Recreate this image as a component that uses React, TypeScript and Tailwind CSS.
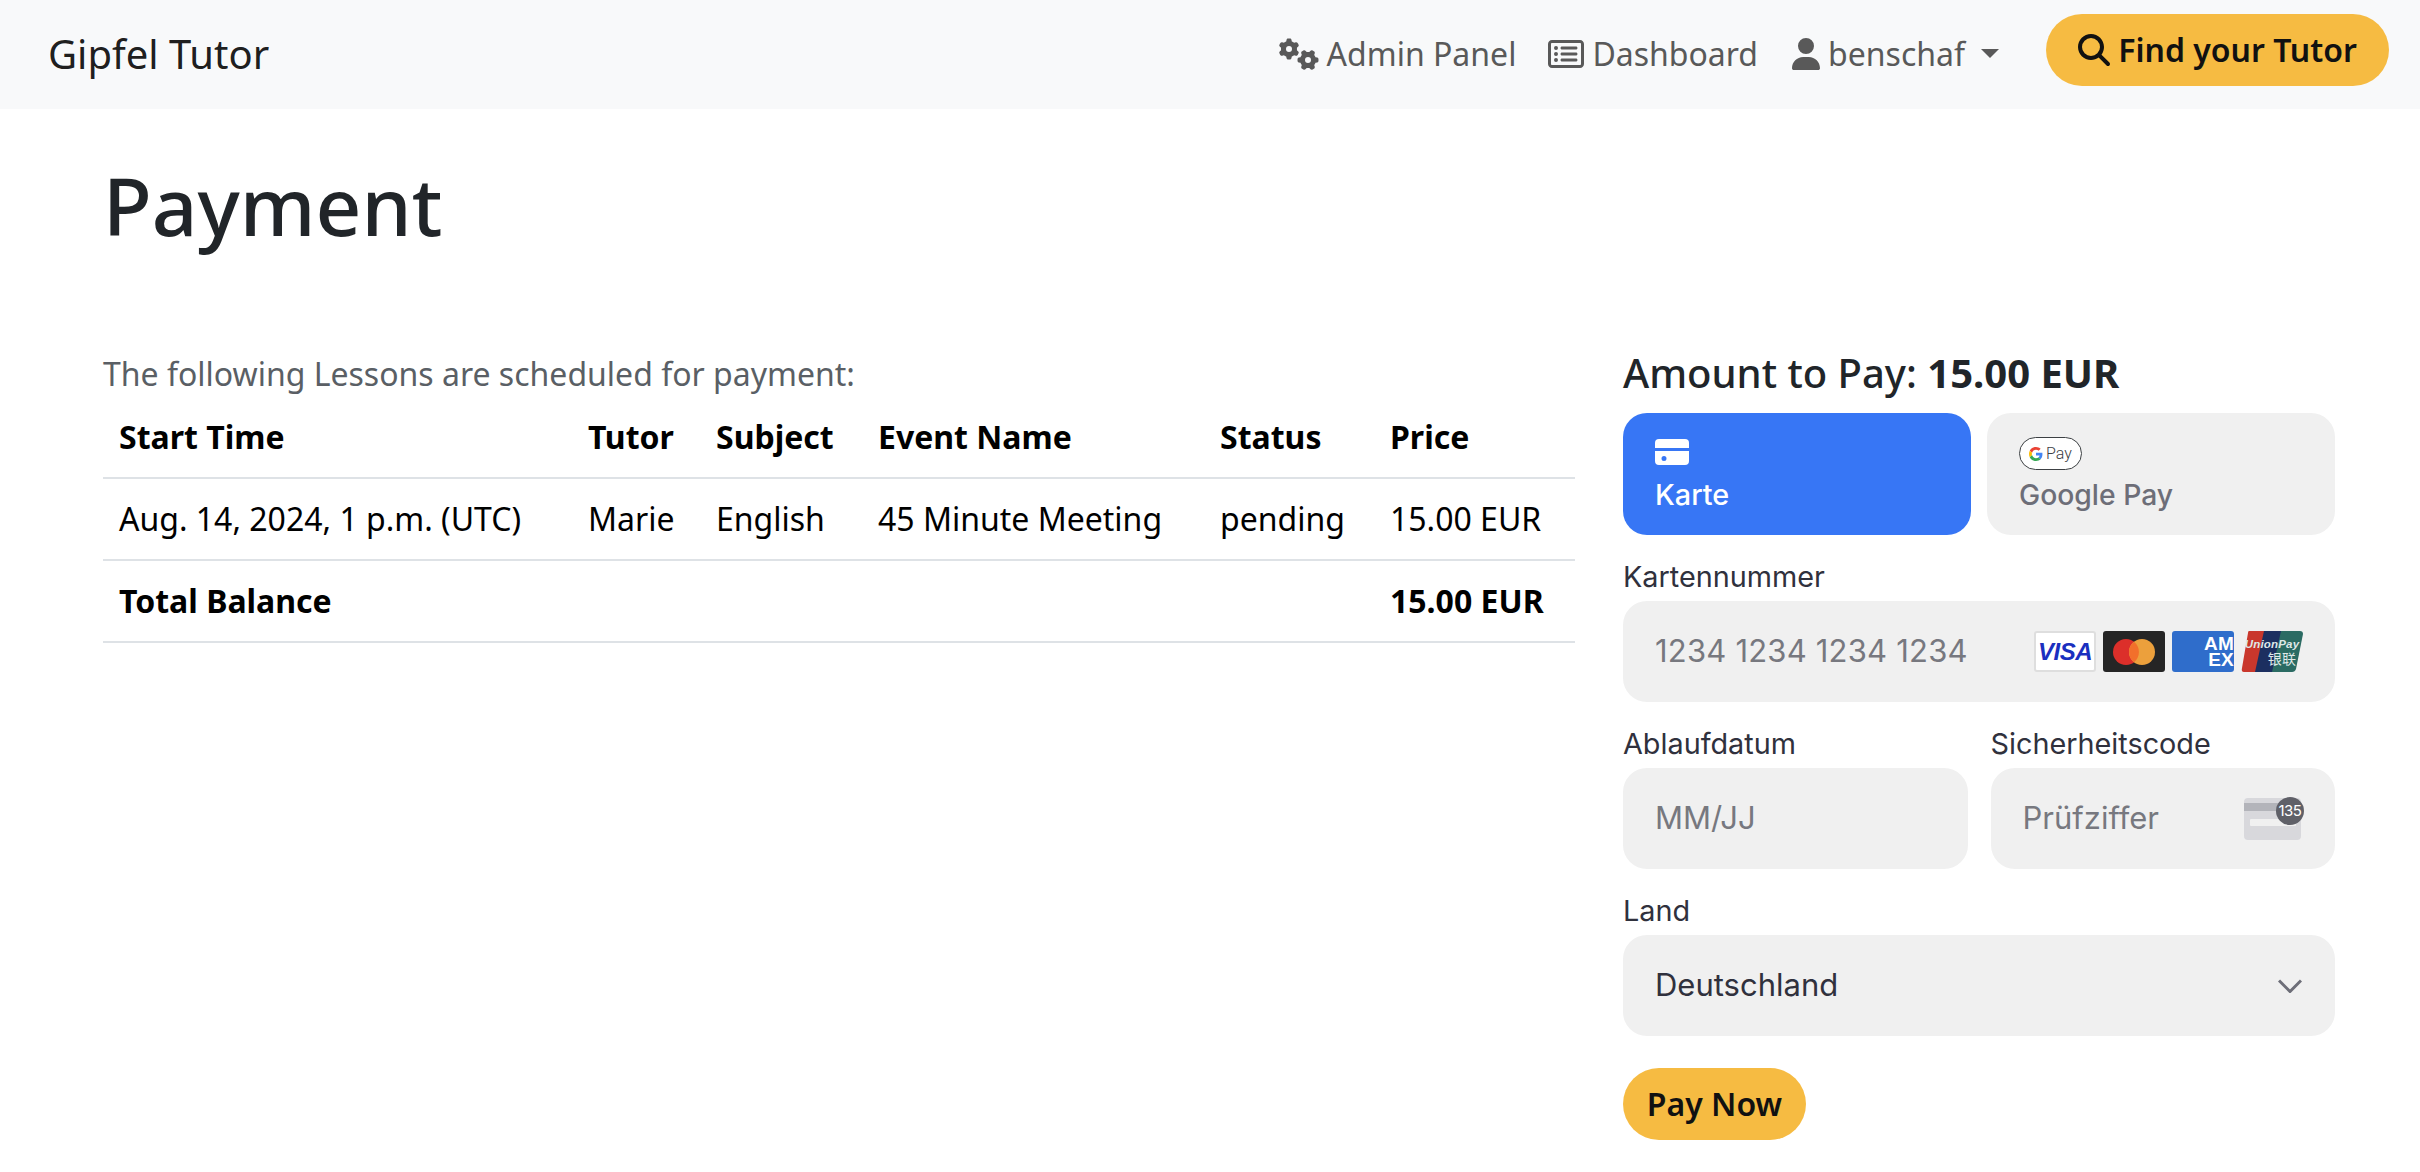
import { FaGears, FaRegRectangleList, FaUser, FaMagnifyingGlass } from "react-icons/fa6"

const NOTO = "font-['Noto_Sans',sans-serif]"
const INTER = "font-['Inter',sans-serif]"

function NavLink({ icon, label }: { icon: React.ReactNode; label: string }) {
  return (
    <a className="flex items-center gap-2 text-[32px] leading-[48px] text-[#595959]">
      {icon}
      {label}
    </a>
  )
}

function VisaMark() {
  return (
    <div className="flex h-[41px] w-[62px] items-center justify-center rounded-[3px] border-2 border-[#dedede] bg-white">
      <span className="font-['Liberation_Sans',sans-serif] text-[24px] font-bold italic leading-none tracking-[-0.5px] text-[#1a2fbf]">VISA</span>
    </div>
  )
}

function MastercardMark() {
  return (
    <div className="flex h-[41px] w-[62px] items-center justify-center rounded-[3px] bg-[#252525]">
      <svg width="42" height="26" viewBox="0 0 42 26">
        <circle cx="13" cy="13" r="13" fill="#dc2f2a" />
        <circle cx="29" cy="13" r="13" fill="#eca03c" />
        <path d="M21 2.800a13 13 0 0 1 0 20.400a13 13 0 0 1 0-20.400z" fill="#f2702b" />
      </svg>
    </div>
  )
}

function AmexMark() {
  return (
    <div className="flex h-[41px] w-[62px] flex-col items-end justify-center rounded-[3px] bg-[#2f6dcb] font-['Liberation_Sans',sans-serif] text-[19px] font-bold leading-[16px] text-white">
      <span>AM</span>
      <span>EX</span>
    </div>
  )
}

function UnionPayMark() {
  return (
    <div className="relative h-[41px] w-[62px]">
      <svg width="62" height="41" viewBox="0 0 62 41" className="absolute inset-0">
        <path d="M8 0h22l-8 41H3q-3 0-2-4L7 2q0-2 1-2z" fill="#c9372c" />
        <path d="M23 0h24l-8 41H14z" fill="#1c2f60" />
        <path d="M40 0h19q3 0 3 3l-7 35q-1 3-4 3H31z" fill="#2b6b63" />
      </svg>
      <div className="absolute inset-0 flex flex-col items-center justify-center text-[#dfe8e8]">
        <span className="font-['Liberation_Sans',sans-serif] text-[11.500px] font-bold italic leading-[13px]">UnionPay</span>
        <span className="ml-[20px] font-['Noto_Sans_CJK_SC',sans-serif] text-[14px] leading-[14px]">银联</span>
      </div>
    </div>
  )
}

function GPayBadge() {
  return (
    <div className="flex h-[33px] w-[63px] items-center justify-center gap-[3px] rounded-full border border-[#3c4043] bg-white">
      <svg width="14" height="14" viewBox="0 0 48 48">
        <path fill="#EA4335" d="M24 9.500c3.500 0 6.600 1.200 9.100 3.600l6.800-6.800C35.800 2.400 30.400 0 24 0 14.600 0 6.500 5.400 2.600 13.200l7.900 6.100C12.400 13.600 17.700 9.500 24 9.500z" />
        <path fill="#4285F4" d="M46.100 24.500c0-1.600-.1-3.100-.4-4.500H24v9h12.400c-.5 2.900-2.200 5.400-4.700 7l7.600 5.900c4.400-4.100 6.800-10.100 6.800-17.400z" />
        <path fill="#FBBC05" d="M10.500 28.700c-.5-1.500-.8-3-.8-4.700s.3-3.200.8-4.700l-7.900-6.100C.9 16.500 0 20.100 0 24s.9 7.500 2.600 10.800l7.900-6.100z" />
        <path fill="#34A853" d="M24 48c6.500 0 11.900-2.100 15.900-5.800l-7.600-5.900c-2.100 1.400-4.900 2.300-8.300 2.300-6.300 0-11.600-4.200-13.500-9.900l-7.900 6.100C6.500 42.600 14.600 48 24 48z" />
      </svg>
      <span className="font-['Roboto',sans-serif] text-[16px] font-light leading-none text-[#3c4043]">Pay</span>
    </div>
  )
}

function FieldLabel({ children }: { children: React.ReactNode }) {
  return <label className={`${INTER} mb-[10px] block h-[28px] text-[28.800px] leading-[28px] text-[#30313d]`}>{children}</label>
}

export default function App() {
  return (
    <div className={`${NOTO} min-h-[1172px] bg-white`}>
      <nav className="flex h-[109px] items-center justify-between bg-[#f8f9fa] pb-[2px] pl-[48px] pr-[31px]">
        <a className="text-[40px] leading-[60px] text-black/90">Gipfel Tutor</a>
        <div className="flex items-center">
          <div className="flex items-center gap-[32px]">
            <NavLink icon={<FaGears className="h-[32px] w-[40px]" />} label="Admin Panel" />
            <NavLink icon={<FaRegRectangleList className="h-[32px] w-[36px]" />} label="Dashboard" />
            <a className="ml-[2px] flex items-center gap-2 text-[32px] leading-[48px] text-[#595959]">
              <FaUser className="h-[32px] w-[28px]" />
              benschaf
              <span className="ml-[8px] h-0 w-0 border-x-[9.600px] border-t-[9.600px] border-x-transparent border-t-[#595959]" />
            </a>
          </div>
          <button className="mb-[8px] ml-[47px] flex h-[72px] w-[343px] items-center justify-center gap-2 rounded-full bg-[#f6bb42] text-[32px] font-semibold text-[#111]">
            <FaMagnifyingGlass className="h-[32px] w-[32px]" />
            Find your Tutor
          </button>
        </div>
      </nav>

      <main className="pl-[103px] pr-[86px]">
        <h1 className="mb-[96px] mt-[48px] text-[80px] font-medium leading-[96px] text-[#212529]">Payment</h1>

        <div className="flex items-start gap-[48px]">
          <div className="w-[1472px] shrink-0">
            <p className="pt-[2px] text-[32px] leading-[46px] text-[#5a5f65]">The following Lessons are scheduled for payment:</p>
            <table className="w-full border-collapse text-[32px] leading-[48px] text-black">
              <thead>
                <tr className="border-b-2 border-[#dee2e6] text-left">
                  <th className="w-[469px] p-[16px] font-bold">Start Time</th>
                  <th className="w-[128px] p-[16px] font-bold">Tutor</th>
                  <th className="w-[162px] p-[16px] font-bold">Subject</th>
                  <th className="w-[342px] p-[16px] font-bold">Event Name</th>
                  <th className="w-[170px] p-[16px] font-bold">Status</th>
                  <th className="p-[16px] font-bold">Price</th>
                </tr>
              </thead>
              <tbody>
                <tr className="border-b-2 border-[#dee2e6]">
                  <td className="p-[16px]">Aug. 14, 2024, 1 p.m. (UTC)</td>
                  <td className="p-[16px]">Marie</td>
                  <td className="p-[16px]">English</td>
                  <td className="p-[16px]">45 Minute Meeting</td>
                  <td className="p-[16px]">pending</td>
                  <td className="p-[16px]">15.00 EUR</td>
                </tr>
                <tr className="border-b-2 border-[#dee2e6] font-bold">
                  <td className="p-[16px]">Total Balance</td>
                  <td className="p-[16px]" />
                  <td className="p-[16px]" />
                  <td className="p-[16px]" />
                  <td className="p-[16px]" />
                  <td className="p-[16px]">15.00 EUR</td>
                </tr>
              </tbody>
            </table>
          </div>

          <div className="w-[712px] shrink-0">
            <h5 className="mb-[16px] text-[40px] font-medium leading-[48px] text-[#212529]">
              Amount to Pay: <strong className="font-bold">15.00 EUR</strong>
            </h5>

            <div className={`${INTER} flex gap-[16px]`}>
              <div className="flex h-[122px] flex-1 flex-col justify-between rounded-[24px] bg-[#3776f5] px-[32px] pb-[22px] pt-[26px] text-[28.800px] font-medium leading-[36px] text-white">
                <svg width="34" height="26" viewBox="0 0 34 26" fill="white">
                  <path d="M0 9V4q0-4 4-4h26q4 0 4 4v5z" />
                  <path fillRule="evenodd" d="M0 12h34v10q0 4-4 4H4q-4 0-4-4zM9 17a2.500 2.500 0 1 0 0 5a2.500 2.500 0 0 0 0-5z" />
                </svg>
                Karte
              </div>
              <div className="flex h-[122px] flex-1 flex-col justify-between rounded-[24px] bg-[#f0f0f0] px-[32px] pb-[22px] pt-[24px] text-[28.300px] font-medium leading-[36px] text-[#6d6e78]">
                <GPayBadge />
                Google Pay
              </div>
            </div>

            <div className={`${INTER} mt-[28px]`}>
              <FieldLabel>Kartennummer</FieldLabel>
              <div className="flex h-[101px] items-center justify-between rounded-[24px] bg-[#f0f0f0] px-[32px] text-[31px] tracking-[0.2px] text-[#77787f]">
                1234 1234 1234 1234
                <div className="flex gap-[7px]">
                  <VisaMark />
                  <MastercardMark />
                  <AmexMark />
                  <UnionPayMark />
                </div>
              </div>
            </div>

            <div className={`${INTER} mt-[28px] flex gap-[23px]`}>
              <div className="flex-1">
                <FieldLabel>Ablaufdatum</FieldLabel>
                <div className="flex h-[101px] items-center rounded-[24px] bg-[#f0f0f0] px-[32px] text-[31px] text-[#77787f]">MM/JJ</div>
              </div>
              <div className="flex-1">
                <FieldLabel>Sicherheitscode</FieldLabel>
                <div className="flex h-[101px] items-center justify-between rounded-[24px] bg-[#f0f0f0] pl-[32px] pr-[31px] text-[31px] text-[#77787f]">
                  Prüfziffer
                  <div className="relative h-[42px] w-[60px]">
                    <svg width="57" height="42" viewBox="0 0 57 42" className="absolute left-0 top-0">
                      <rect width="57" height="42" rx="4" fill="#d8d8dc" />
                      <rect y="5" width="57" height="8" fill="#b3b4ba" />
                      <rect x="6" y="21" width="46" height="7" rx="1" fill="#f0f0f0" />
                    </svg>
                    <span className="absolute -top-[1px] right-0 flex h-[28px] w-[28px] items-center justify-center rounded-full bg-[#5f6068] text-[15px] leading-none tracking-[-0.5px] text-white">135</span>
                  </div>
                </div>
              </div>
            </div>

            <div className={`${INTER} mt-[28px]`}>
              <FieldLabel>Land</FieldLabel>
              <div className="flex h-[101px] items-center justify-between rounded-[24px] bg-[#f0f0f0] pl-[32px] pr-[33px] text-[31px] text-[#30313d]">
                Deutschland
                <svg width="24" height="14" viewBox="0 0 24 14" fill="none" stroke="#6d6e78" strokeWidth="3">
                  <path d="M1 1.500l11 11l11-11" />
                </svg>
              </div>
            </div>

            <button className="mt-[32px] h-[72px] w-[183px] rounded-full bg-[#f6bb42] text-[32px] font-semibold text-[#111]">Pay Now</button>
          </div>
        </div>
      </main>
    </div>
  )
}
